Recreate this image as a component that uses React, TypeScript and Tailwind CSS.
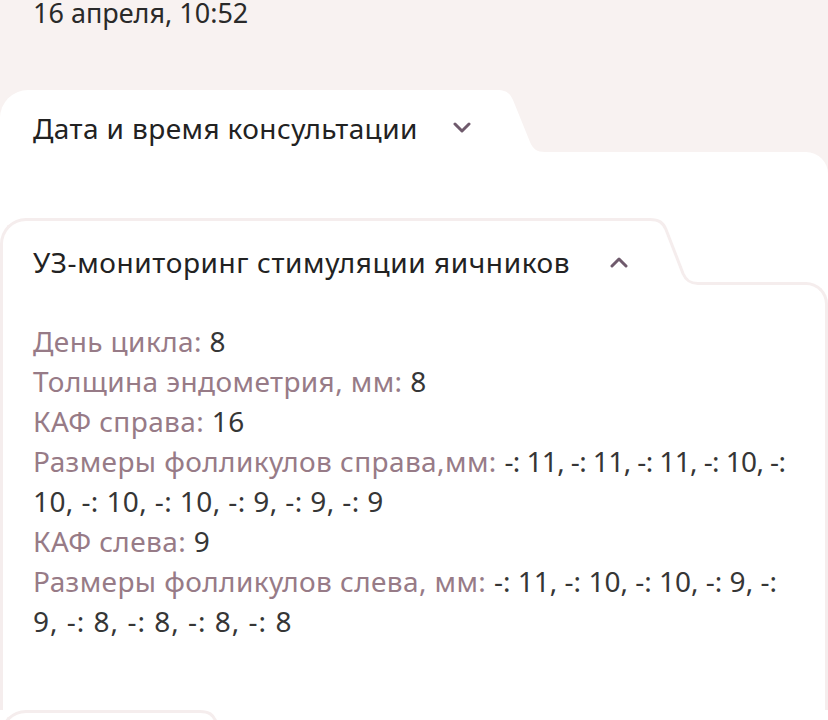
import React from "react";

const FONT = "font-['Noto_Sans',sans-serif]";

function Chevron({ up }: { up?: boolean }) {
  return (
    <svg width="18" height="12" viewBox="0 0 18 12" className="shrink-0">
      <path
        d={up ? "M2 10 L9 3 L16 10" : "M2 2 L9 9 L16 2"}
        fill="none"
        stroke="#6f5a6c"
        strokeWidth="3"
        strokeLinecap="round"
        strokeLinejoin="round"
      />
    </svg>
  );
}

function Slope({ h, outlined }: { h: number; outlined?: boolean }) {
  const b = outlined ? 1.5 : 0;
  const bottom = outlined ? h - 1.5 : h;
  const fillPath = `M0,${0} C9,0 13,3 16,10 L33,${bottom - 10} C36,${bottom - 3} 40,${bottom} 48,${bottom} L48,${h} L0,${h} Z`;
  const strokePath = `M0,${b} C9,${b} 13,${b + 3} 16,${b + 10} L33,${bottom - 10} C36,${bottom - 3} 40,${bottom} 48,${bottom}`;
  return (
    <svg width="48" height={h} viewBox={`0 0 48 ${h}`} className="shrink-0 block">
      <path d={fillPath} fill="#ffffff" />
      {outlined && <path d={strokePath} fill="none" stroke="#f5eded" strokeWidth="3" />}
    </svg>
  );
}

function Row({
  label,
  value,
  rest,
  valueClass = "",
  restClass = "",
}: {
  label: string;
  value: string;
  rest?: string;
  valueClass?: string;
  restClass?: string;
}) {
  return (
    <div>
      <div className="whitespace-nowrap">
        <span className="text-[#977b87]">{label}</span>{" "}
        <span className={`text-[#363636] ${valueClass}`}>{value}</span>
      </div>
      {rest && <div className={`text-[#363636] ${restClass}`}>{rest}</div>}
    </div>
  );
}

export default function App() {
  return (
    <div className={`w-[828px] h-[720px] overflow-hidden bg-[#f8f2f1] ${FONT} text-[28px] tracking-[0.4px]`}>
      <div className="h-[90px] pl-[33px] flex flex-col">
        <div className="-mt-[6px] leading-[38px] text-[27px] tracking-[0px] text-[#2a2a2a]">16 апреля, 10:52</div>
      </div>

      {/* card 1 tab */}
      <div className="flex h-[62px]">
        <div className="w-[497px] bg-white rounded-tl-[28px] pl-[33px] pt-[19px]">
          <div className="flex items-center gap-[35px] leading-[38px] text-[#222222]">
            <span>Дата и время консультации</span>
            <Chevron />
          </div>
        </div>
        <Slope h={62} />
        <div className="flex-1" />
      </div>

      <div className="bg-white rounded-tr-[22px] pt-[66px] h-[600px]">
        {/* card 2 tab */}
        <div className="flex h-[67px] relative z-10">
          <div className="w-[650px] bg-white rounded-tl-[26px] border-l-[3px] border-t-[3px] border-[#f5eded] pl-[30px] pt-[22px]">
            <div className="flex items-center gap-[40px] leading-[38px] text-[#222222]">
              <span className="tracking-[0.6px]">УЗ-мониторинг стимуляции яичников</span>
              <Chevron up />
            </div>
          </div>
          <Slope h={67} outlined />
          <div className="flex-1" />
        </div>
        <div className="-mt-[3px] border-t-[3px] border-x-[3px] border-[#f5eded] rounded-tr-[22px] pl-[30px] pr-[10px] pt-[36px] pb-[69px] leading-[40px]">
          <Row label="День цикла:" value="8" />
          <Row label="Толщина эндометрия, мм:" value="8" />
          <Row label="КАФ справа:" value="16" />
          <Row
            label="Размеры фолликулов справа,мм:"
            value="-: 11, -: 11, -: 11, -: 10, -:"
            rest="10, -: 10, -: 10, -: 9, -: 9, -: 9"
            valueClass="tracking-[-0.6px]"
          />
          <Row label="КАФ слева:" value="9" />
          <Row
            label="Размеры фолликулов слева, мм:"
            value="-: 11, -: 10, -: 10, -: 9, -:"
            rest="9, -: 8, -: 8, -: 8, -: 8"
            valueClass="tracking-[0px]"
            restClass="tracking-[1px]"
          />
        </div>

        {/* card 3 tab */}
        <div className="flex h-[40px]">
          <div className="w-[200px] bg-white rounded-tl-[26px] border-l-[3px] border-t-[3px] border-[#f5eded]" />
          <Slope h={40} outlined />
          <div className="flex-1" />
        </div>
      </div>
    </div>
  );
}
